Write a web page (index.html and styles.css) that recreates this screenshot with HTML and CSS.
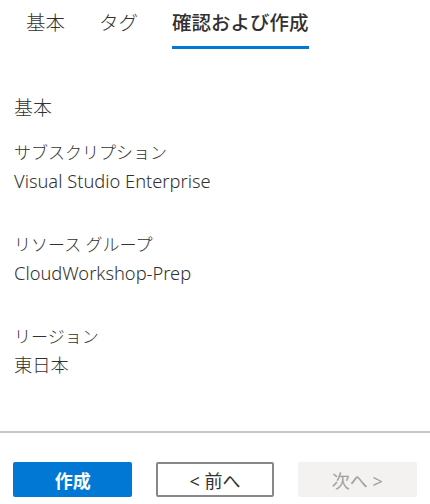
FILE: index.html
```html
<!DOCTYPE html>
<html lang="ja">
<head>
<meta charset="utf-8">
<title>確認および作成</title>
<link rel="stylesheet" href="styles.css">
</head>
<body>
<div class="page">
  <nav class="tabs">
    <div class="tab">基本</div>
    <div class="tab">タグ</div>
    <div class="tab active">確認および作成</div>
  </nav>
  <main class="content">
    <h2 class="section">基本</h2>
    <div class="field">
      <div class="label">サブスクリプション</div>
      <div class="value">Visual Studio Enterprise</div>
    </div>
    <div class="field">
      <div class="label">リソース グループ</div>
      <div class="value">CloudWorkshop-Prep</div>
    </div>
    <div class="field">
      <div class="label">リージョン</div>
      <div class="value">東日本</div>
    </div>
  </main>
  <footer class="footer">
    <button class="btn primary">作成</button>
    <button class="btn secondary">&lt; 前へ</button>
    <button class="btn disabled" disabled>次へ &gt;</button>
  </footer>
</div>
</body>
</html>
```

FILE: styles.css
```css
html, body {
  margin: 0;
  padding: 0;
  background: #ffffff;
}
body {
  font-family: "Noto Sans", "Noto Sans CJK JP", sans-serif;
  color: #323130;
}
.page {
  display: flex;
  flex-direction: column;
  min-height: 504px;
}
.tabs {
  display: flex;
  gap: 34px;
  padding-left: 26px;
  height: 49px;
}
.tab {
  font-size: 19.5px;
  font-weight: 300;
  line-height: 28px;
  padding-top: 9px;
  padding-bottom: 9px;
  border-bottom: 3px solid transparent;
  color: #323130;
}
.tab.active {
  font-weight: 500;
  border-bottom-color: #0078d4;
}
.content {
  padding: 45px 14px 0;
  flex: 1;
}
.section {
  margin: 0;
  font-size: 19px;
  font-weight: 300;
  line-height: 28px;
}
.field {
  margin-top: 36px;
}
.section + .field {
  margin-top: 17px;
}
.label {
  font-size: 17px;
  font-weight: 300;
  line-height: 28px;
}
.value {
  font-size: 18.3px;
  font-weight: 300;
  line-height: 28px;
}
.footer {
  border-top: 2px solid #c8c6c4;
  padding: 29px 13px 7px;
  display: flex;
  gap: 24px;
}
.btn {
  height: 35px;
  width: 120px;
  border-radius: 2px;
  font-family: "Noto Sans", "Noto Sans CJK JP", sans-serif;
  font-size: 18px;
  padding: 0;
  border: none;
}
.primary {
  background: #0078d4;
  color: #ffffff;
  font-weight: 700;
}
.secondary {
  width: 118px;
  background: #ffffff;
  border: 2px solid #8a8886;
  color: #323130;
}
.disabled {
  background: #f3f2f1;
  color: #a19f9d;
}
```
